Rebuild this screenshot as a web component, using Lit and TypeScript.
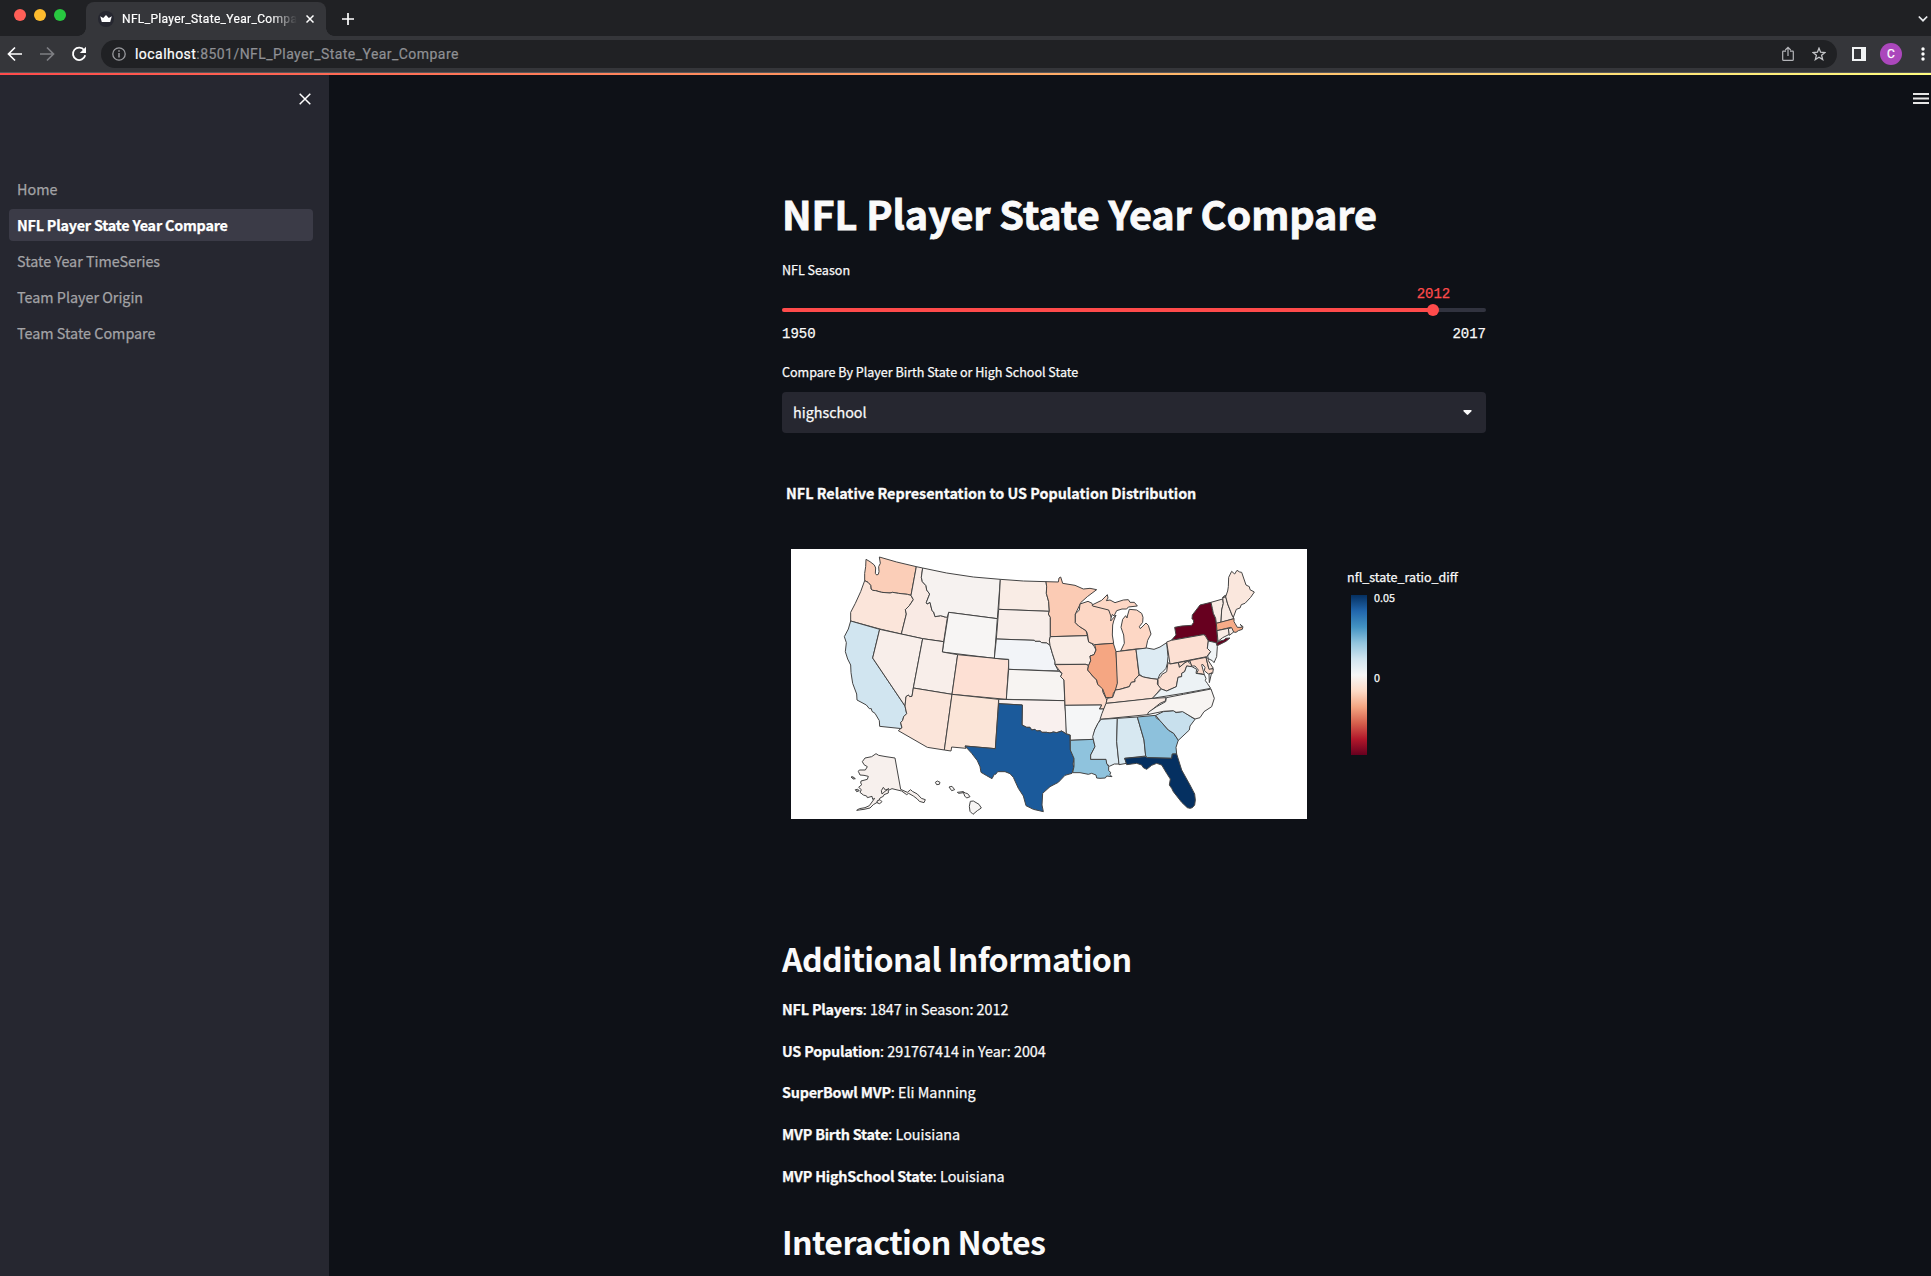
import { LitElement, html, css, svg } from "lit";
import { customElement } from "lit/decorators.js";

type Shape = { f: string; p: string };
type Region = { dx: number; shapes: Shape[] };

const REGIONS: Region[] = [
  {
    dx: 0,
    shapes: [
      { f: "#fbceb8", p: "258,58 270,65 283,75 287,84 286,100 290,105 295,103 297,95 296,80 301,70 298,51 350,66 409,80 393,166 382,163 355,160 338,157 330,159 305,157 287,152 278,151 273,147 272,136 264,127 254,122 254,100 257,80" },
      { f: "#fbe5da", p: "254,122 264,127 272,136 273,147 278,151 287,152 305,157 330,159 338,157 355,160 382,163 393,166 400,179 388,197 376,209 379,222 364,282 300,267 212,243 212,217 226,190 242,155" },
      { f: "#f9eae4", p: "409,80 428,84 424,112 427,125 438,137 440,150 449,162 439,187 441,192 450,187 456,212 461,216 465,230 482,227 495,231 503,227 491,305 428,296 364,282 379,222 376,209 388,197 400,179 393,166" },
      { f: "#f6f2f0", p: "428,84 500,99 580,111 661,118 652,236 506,217 502,232 495,231 482,227 465,230 461,216 456,212 450,187 441,192 439,187 449,162 440,150 438,137 427,125 424,112" },
      { f: "#f7f5f4", p: "506,217 652,236 643,355 487,336" },
      { f: "#d1e5f0", p: "212,243 299,268 278,354 375,498 380,521 371,530 368,541 362,548 366,566 299,559 298,542 285,520 276,514 274,506 268,506 259,495 246,488 231,480 230,462 218,430 213,398 212,375 203,357 196,335 199,308 193,290 205,267" },
      { f: "#f8eeea", p: "299,268 428,296 400,444 396,469 389,470 385,465 378,470 375,498 278,354" },
      { f: "#f8eeea", p: "428,296 491,305 487,336 533,344 516,463 400,444" },
      { f: "#fbe5da", p: "400,444 516,463 493,630 442,622 355,572 362,566 366,563 362,548 368,541 371,530 380,521 375,498 378,470 385,465 389,470 396,469" },
      { f: "#fde0d4", p: "533,344 687,359 679,478 516,463" },
      { f: "#fbe5d8", p: "516,463 656,478 646,626 555,618 558,625 515,621 513,633 493,630" },
      { f: "#f7f0ed", p: "345,654 318,650 296,646 288,641 275,650 255,654 247,665 252,674 262,680 256,690 238,690 235,694 240,705 252,706 265,709 262,718 243,723 242,730 246,733 236,742 244,749 240,757 250,765 260,768 262,773 276,769 278,778 284,775 268,797 255,803 238,806 230,811 252,808 270,804 280,794 295,785 300,774 310,769 312,764 325,759 325,751 336,746 348,749 365,753 380,764 386,760 400,768 412,777 418,784 432,788 436,779 424,775 412,762 397,754 392,749 382,757 362,748" },
      { f: "#f7f0ed", p: "310,742 304,752 306,762 315,754 327,746 316,750" },
      { f: "#f7f0ed", p: "291,783 300,779 306,785 299,791 292,789" },
      { f: "#999999", p: "213,711 218,710 226,716 220,717" },
      { f: "#aaaaaa", p: "226,749 233,748 238,752 230,755" },
      { f: "#f7f5f4", p: "466,727 472,723 480,727 478,733 470,734" },
      { f: "#f7f5f4", p: "507,741 516,739 524,749 515,752" },
      { f: "#f7f5f4", p: "532,757 549,755 551,758 536,760" },
      { f: "#f7f5f4", p: "549,755 556,759 563,761 570,770 560,774 554,768 552,762" },
      { f: "#f7f5f4", p: "571,784 580,783 597,793 604,804 592,812 579,823 570,814 568,799" },
    ],
  },
  {
    dx: 660,
    shapes: [
      { f: "#f9ece5", p: "1,118 70,123 138,125 140,140 139,160 146,185 148,214 -4,208" },
      { f: "#f8eeea", p: "-4,208 148,214 145,222 151,232 151,290 148,300 153,318 140,309 125,308 120,304 105,304 103,301 -11,297" },
      { f: "#f2f4f8", p: "-11,297 103,301 105,304 120,304 125,308 140,309 150,316 157,340 165,365 165,373 175,393 26,388 26,358 -17,355" },
      { f: "#f7f4f2", p: "26,388 177,394 186,400 182,410 192,420 194,482 19,478" },
      { f: "#f9f0ee", p: "-4,478 194,482 195,500 199,540 199,582 185,573 170,578 160,576 150,579 140,577 125,577 121,572 110,573 105,568 95,570 90,562 80,562 66,555 67,495 -4,491" },
      { f: "#1b5a9b", p: "-4,491 67,495 66,555 80,562 90,562 95,570 105,568 110,573 121,572 125,577 140,577 150,579 160,576 170,578 185,573 196,580 210,586 211,630 222,655 219,672 221,682 216,700 195,706 175,727 150,740 128,760 126,795 130,815 100,808 78,797 70,768 55,745 40,712 30,701 15,695 -7,695 -13,703 -17,703 -24,716 -40,707 -57,697 -60,680 -68,662 -85,640 -105,618 -14,626" },
      { f: "#fbcbb4", p: "138,125 175,126 177,114 182,111 188,130 225,136 250,147 270,145 290,149 262,170 242,188 240,193 226,222 226,248 236,258 258,272 262,287 151,290 151,232 145,222 148,214 146,185 139,160 140,140" },
      { f: "#f9ece5", p: "151,290 262,287 266,306 275,310 283,320 288,330 282,344 270,348 272,362 266,376 258,373 165,373 165,365 157,340 150,316 148,300" },
      { f: "#fddbcb", p: "165,374 258,373 265,377 263,390 278,408 290,420 293,433 308,443 308,455 318,475 322,485 312,507 298,507 305,495 195,496 192,420 182,410 186,400 177,390" },
      { f: "#f5f6f7", p: "195,496 305,495 298,507 312,507 303,535 294,550 284,570 280,598 211,601 211,585 199,581" },
      { f: "#8fc3dd", p: "211,601 280,598 285,620 272,645 272,658 320,658 320,670 326,680 326,692 332,697 330,704 336,710 320,708 316,714 300,715 290,714 288,705 275,700 265,703 240,698 218,698 222,680 222,655 211,630" },
      { f: "#fdd7c5", p: "240,192 264,184 276,190 278,197 315,204 325,207 334,225 332,243 348,225 341,243 338,255 337,285 341,310 284,314 266,306 262,280 258,272 236,258 226,248 226,222 238,210" },
      { f: "#fdd7c5", p: "276,195 305,181 322,164 324,174 319,182 330,180 345,188 370,180 385,179 390,187 403,187 412,198 385,201 380,207 366,207 350,212 342,228 337,223 334,232 326,210 278,198" },
      { f: "#fdd7c5", p: "388,208 410,210 425,220 429,232 428,247 418,260 421,266 438,249 445,256 453,282 443,301 438,325 408,327 362,333 373,310 371,285 363,262 368,238 377,227 381,234 383,225" },
      { f: "#f5a682", p: "284,314 340,310 348,335 354,420 350,445 340,460 338,472 318,473 308,447 293,433 290,420 278,408 263,390 266,376 272,362 270,348 282,344 288,330" },
      { f: "#fdd2bd", p: "348,335 408,328 417,405 405,418 405,425 394,427 388,440 372,444 360,448 346,450 352,430" },
      { f: "#ddebf3", p: "408,328 440,324 462,328 480,321 500,308 504,350 502,370 498,385 487,397 480,402 473,418 450,415 430,411 420,405 417,400" },
      { f: "#fce3d7", p: "417,405 430,411 450,415 473,418 472,432 483,445 458,475 400,482 330,489 318,490 322,475 338,472 346,450 360,448 388,440 394,427 405,425 405,418" },
      { f: "#fae9e1", p: "318,490 330,489 458,475 498,473 496,483 480,490 455,510 442,524 300,538 306,520" },
      { f: "#ddebf3", p: "303,538 352,535 350,605 357,672 343,672 328,679 320,670 318,658 272,658 272,645 285,620 278,590 284,570 294,550" },
      { f: "#d7e8f1", p: "352,535 412,531 432,600 437,648 374,655 380,670 357,674 350,605" },
      { f: "#8dc1dc", p: "412,531 467,526 468,533 480,542 505,570 521,580 535,600 528,622 530,642 517,642 515,655 442,653 437,648 432,600" },
      { f: "#053061", p: "374,655 437,650 442,653 515,655 517,642 530,642 545,690 570,735 584,762 586,780 584,795 577,803 570,805 562,803 545,787 520,755 515,745 508,735 511,717 500,700 485,675 470,670 455,676 440,688 430,683 425,675 410,670 380,674" },
      { f: "#c8e0ed", p: "467,526 490,515 520,512 528,518 548,514 585,538 570,558 568,570 535,601 521,580 505,570 480,542" },
    ],
  },
  {
    dx: 1080,
    shapes: [
      { f: "#67001f", p: "94,301 108,285 104,262 125,258 155,256 161,247 160,240 156,236 157,225 180,195 213,187 217,205 220,220 227,235 229,250 232,290 232,310 205,303 195,286 190,284" },
      { f: "#67001f", p: "230,310 237,304 252,300 257,295 270,294 258,304 232,317" },
      { f: "#fce0d3", p: "80,306 94,301 190,284 195,286 205,303 202,325 212,335 200,350 90,372" },
      { f: "#f0f4f6", p: "205,303 228,308 232,320 230,350 222,368 217,362 205,356 203,348 212,335 202,325" },
      { f: "#f9ece5", p: "213,187 248,177 250,190 245,210 243,247 229,250 227,235 220,220 217,205" },
      { f: "#f8eae3", p: "248,172 256,166 263,192 276,225 282,236 243,247 245,210 250,190" },
      { f: "#fae7dd", p: "248,174 257,170 263,153 265,140 266,112 275,94 284,102 291,91 299,96 305,97 318,135 328,140 330,149 343,156 332,172 315,190 304,194 300,204 289,208 280,232 276,225 263,192 256,166" },
      { f: "#f6ab88", p: "229,250 282,236 282,245 285,250 292,262 305,262 306,258 300,253 309,260 307,268 295,272 288,277 280,276 272,262 231,272" },
      { f: "#f9ece5", p: "231,272 265,265 268,283 248,293 234,304" },
      { f: "#f9ece5", p: "265,266 275,263 281,276 268,286" },
      { f: "#fddbcb", p: "115,368 198,352 206,385 220,387 218,400 205,402 193,392 195,382 187,372 185,375 193,404 182,401 170,400 175,390 165,378 155,378 150,363 135,368 118,382" },
      { f: "#f9e4da", p: "198,352 205,356 205,362 220,385 207,388" },
      { f: "#fce0d3", p: "84,368 90,372 115,368 118,382 135,368 143,364 156,376 150,380 140,378 134,395 125,400 125,410 114,412 109,440 80,453 64,447 54,435 54,418 62,410 66,403 80,395" },
      { f: "#ecf2f5", p: "37,475 64,447 80,453 109,440 114,412 125,410 125,400 134,395 140,378 156,380 170,388 168,400 193,404 198,415 196,422 202,430 212,445 130,460" },
      { f: "#ecf2f5", p: "207,403 215,398 208,428" },
      { f: "#f7f4f2", p: "79,473 130,463 213,447 223,475 215,500 192,515 180,533 165,537 128,515 108,517 100,512 70,514 22,524 26,516 50,500 77,485" },
    ],
  },
];

const PAGES = [
  "Home",
  "NFL Player State Year Compare",
  "State Year TimeSeries",
  "Team Player Origin",
  "Team State Compare",
];

const FACTS = [
  ["NFL Players", "1847 in Season: 2012"],
  ["US Population", "291767414 in Year: 2004"],
  ["SuperBowl MVP", "Eli Manning"],
  ["MVP Birth State", "Louisiana"],
  ["MVP HighSchool State", "Louisiana"],
];

@customElement("browser-bar")
class BrowserBar extends LitElement {
  static styles = css`
    :host { display: block; flex: none; font-family: Roboto, "Liberation Sans", sans-serif; color: #fff; }
    svg { display: block; flex: none; }
    .strip { height: 36px; background: #202124; display: flex; box-sizing: border-box; padding-left: 14px; }
    .lights { display: flex; gap: 8px; padding-top: 9px; width: 72px; flex: none; }
    .light { width: 12px; height: 12px; border-radius: 50%; }
    .red { background: #ff5f57; }
    .yellow { background: #febc2e; }
    .green { background: #28c840; }
    .tab { margin-top: 2px; width: 240px; height: 34px; box-sizing: border-box; background: #35363a; border-radius: 8px 8px 0 0; display: flex; align-items: center; padding: 0 10px 0 12px; position: relative; }
    .tab::before, .tab::after { content: ""; position: absolute; bottom: 0; width: 8px; height: 8px; }
    .tab::before { left: -8px; background: radial-gradient(circle at 0 0, transparent 7.5px, #35363a 8px); }
    .tab::after { right: -8px; background: radial-gradient(circle at 100% 0, transparent 7.5px, #35363a 8px); }
    .title { margin-left: 8px; width: 175px; overflow: hidden; white-space: nowrap; font-size: 12px; line-height: 18px; letter-spacing: 0.33px; -webkit-text-stroke: 0.2px; -webkit-mask-image: linear-gradient(90deg, #000 148px, transparent 175px); }
    .tabx { margin-left: 9px; }
    .plus { margin: 13px 0 0 16px; }
    .chev { margin: 15px 3px 0 auto; }
    .bar { height: 36px; background: #35363a; display: flex; align-items: center; box-sizing: border-box; padding: 0 6px 0 7px; }
    .back { margin-right: 16px; }
    .fwd { margin-right: 16px; }
    .reload { margin-right: 14px; }
    .omni { flex: 1; height: 28px; background: #202124; border-radius: 14px; display: flex; align-items: center; padding: 0 11px; }
    .url { flex: 1; margin-left: 9px; font-size: 14px; line-height: 20px; color: #8f9094; white-space: nowrap; letter-spacing: 0.45px; -webkit-text-stroke: 0.2px; }
    .host { color: #fff; }
    .star { margin-left: 18px; }
    .panel { margin-left: 15px; }
    .avatar { margin: 0 19px 0 14px; width: 22px; height: 22px; border-radius: 50%; background: #ab47bc; font-size: 12px; line-height: 22px; text-align: center; }
    .sep { height: 1px; background: #55565a; }
  `;
  render() {
    return html`
      <div class="strip">
        <div class="lights">
          <div class="light red"></div><div class="light yellow"></div><div class="light green"></div>
        </div>
        <div class="tab">
          <svg width="16" height="16" viewBox="0 0 16 16"><circle cx="8" cy="8" r="8" fill="#262730"/><path d="M2.2 5.2 5.2 7 8 4 10.800 7l3-1.800L12.200 11H3.800z" fill="#fff"/></svg>
          <span class="title">NFL_Player_State_Year_Compare</span>
          <svg class="tabx" width="8" height="8" viewBox="0 0 8 8"><path d="M.5.5l7 7M7.500.5l-7 7" stroke="#fff" stroke-width="1.500"/></svg>
        </div>
        <svg class="plus" width="12" height="12" viewBox="0 0 12 12"><path d="M6 0v12M0 6h12" stroke="#fff" stroke-width="1.700"/></svg>
        <svg class="chev" width="10" height="8" viewBox="0 0 10 8"><path d="M.8 1.500 5 5.700 9.200 1.500" fill="none" stroke="#e8eaed" stroke-width="1.700"/></svg>
      </div>
      <div class="bar">
        <svg class="back" width="16" height="16" viewBox="0 0 16 16"><path d="M15 8H2M8 1.500 1.500 8 8 14.500" fill="none" stroke="#fff" stroke-width="1.700"/></svg>
        <svg class="fwd" width="16" height="16" viewBox="0 0 16 16"><path d="M1 8h13M8 1.500 14.500 8 8 14.500" fill="none" stroke="#7e7f83" stroke-width="1.700"/></svg>
        <svg class="reload" width="16" height="16" viewBox="0 0 16 16"><path d="M13.200 4.200A6.200 6.200 0 1 0 14.200 9.200" fill="none" stroke="#fff" stroke-width="1.800"/><path d="M15 .8V7H8.800z" fill="#fff"/></svg>
        <div class="omni">
          <svg width="14" height="14" viewBox="0 0 14 14"><circle cx="7" cy="7" r="6.200" fill="none" stroke="#9a9b9f" stroke-width="1.300"/><path d="M7 6v4.500M7 3.300v1.500" stroke="#9a9b9f" stroke-width="1.500"/></svg>
          <div class="url"><span class="host">localhost</span>:8501/NFL_Player_State_Year_Compare</div>
          <svg width="12" height="16" viewBox="0 0 12 16"><path d="M4 5.200H1.300a.6.600 0 0 0-.6.600v7.600a1 1 0 0 0 1 1h8.600a1 1 0 0 0 1-1V5.800a.6.600 0 0 0-.6-.6H8M6 10V1.500M3.300 4 6 1.300 8.700 4" fill="none" stroke="#b4b5b9" stroke-width="1.200"/></svg>
          <svg class="star" width="14" height="14" viewBox="0 0 14 14"><path d="M7 1.200 8.600 5.200 12.900 5.500 9.600 8.300 10.700 12.600 7 10.200 3.300 12.600 4.400 8.300 1.100 5.500 5.400 5.200z" fill="none" stroke="#c4c5c8" stroke-width="1.300"/></svg>
        </div>
        <svg class="panel" width="14" height="14" viewBox="0 0 14 14"><path fill="#f1f3f4" fill-rule="evenodd" d="M0 0h14v14H0zM2 2v10h7V2z"/></svg>
        <div class="avatar">C</div>
        <svg width="4" height="14" viewBox="0 0 4 14" fill="#fff"><circle cx="2" cy="2" r="1.700"/><circle cx="2" cy="7" r="1.700"/><circle cx="2" cy="12" r="1.700"/></svg>
      </div>
      <div class="sep"></div>
    `;
  }
}

@customElement("state-map")
class StateMap extends LitElement {
  static styles = css`
    :host { display: block; }
    .map { display: block; width: 516px; height: 270px; background: #fff; }
    .shape { stroke: #444; stroke-width: 3; stroke-linejoin: round; }
  `;
  render() {
    return html`<svg class="map" viewBox="33 27 1548 810">
      ${REGIONS.map(
        (r) => svg`<g transform="translate(${r.dx} 0)">${r.shapes.map(
          (s) => svg`<polygon class="shape" fill=${s.f} points=${s.p}></polygon>`
        )}</g>`
      )}
    </svg>`;
  }
}

@customElement("app-root")
class AppRoot extends LitElement {
  static styles = css`
    :host { display: flex; flex-direction: column; height: 1276px; overflow: hidden; background: #0e1117; color: #fafafa; font-family: "Noto Sans CJK SC", "Open Sans", sans-serif; font-size: 14.35px; -webkit-text-stroke: 0.25px; }
    svg { display: block; }
    .accent { height: 2px; flex: none; background: linear-gradient(90deg, #ff4b4b, #fffd80); }
    .body { flex: 1; display: flex; min-height: 0; }
    .side { width: 329px; flex: none; background: #262730; box-sizing: border-box; padding: 18px 16px 0 9px; }
    .close { margin: 0 2px 0 auto; }
    .nav { margin-top: 68px; display: flex; flex-direction: column; gap: 4px; }
    .item { height: 32px; border-radius: 4px; padding-left: 8px; line-height: 31px; color: #a3a3a6; white-space: nowrap; }
    .on { background: #3b3b47; color: #fff; font-weight: 700; letter-spacing: -0.21px; }
    .main { flex: 1; display: flex; position: relative; justify-content: center; }
    .menu { position: absolute; top: 18px; right: 2px; }
    .col { width: 704px; margin-left: 8px; }
    .h1 { margin: 112px 0 0; font-size: 39.6px; line-height: 52px; font-weight: 700; white-space: nowrap; letter-spacing: -0.11px; -webkit-text-stroke: 0.8px; }
    .label { font-size: 12.55px; line-height: 20px; height: 20px; }
    .season { margin-top: 21px; }
    .mono { font-family: "Liberation Mono", monospace; font-size: 14px; line-height: 18px; height: 18px; }
    .valrow { display: flex; margin-top: 5px; color: #ff4b4b; }
    .val { transform: translateX(-50%); }
    .track { margin-top: 5px; height: 4px; border-radius: 4px; display: flex; align-items: center; background: #31333f; }
    .fill { height: 4px; background: #ff4b4b; border-radius: 4px 0 0 4px; }
    .thumb { width: 12px; height: 12px; border-radius: 50%; background: #ff4b4b; margin-left: -6px; }
    .ends { display: flex; justify-content: space-between; margin-top: 13px; }
    .by { margin-top: 19px; }
    .select { margin-top: 10px; height: 41px; border-radius: 4px; background: #262730; display: flex; align-items: center; justify-content: space-between; padding: 0 14px 0 11px; box-sizing: border-box; }
    .choice { line-height: 38px; height: 40px; }
    .ctitle { margin: 50px 0 0 4px; font-weight: 700; font-size: 14.35px; line-height: 20px; height: 20px; -webkit-text-stroke: 0.3px; white-space: nowrap; }
    .chart { margin: 46px 0 0 9px; display: flex; align-items: flex-start; height: 270px; width: 695px; }
    .legend { margin: 18px 0 0 40px; }
    .ltitle { font-size: 12.5px; line-height: 20px; height: 20px; }
    .scale { display: flex; margin: 8px 0 0 4px; }
    .ramp { width: 16px; height: 160px; background: linear-gradient(180deg, #053061 0%, #2166ac 10%, #4393c3 20%, #92c5de 30%, #d1e5f0 40%, #f7f7f7 50%, #fddbc7 60%, #f4a582 70%, #d6604d 80%, #b2182b 90%, #67001f 100%); }
    .ticks { margin: -8px 0 0 7px; display: flex; flex-direction: column; justify-content: space-between; height: 100px; font-size: 10.8px; line-height: 20px; }
    .h2 { font-size: 32.2px; line-height: 40px; height: 40px; font-weight: 600; margin: 119px 0 0; white-space: nowrap; letter-spacing: -0.62px; -webkit-text-stroke: 0; }
    .facts { margin-top: 19px; display: flex; flex-direction: column; gap: 17.7px; }
    .fact { line-height: 24px; height: 24px; }
    .fact b { letter-spacing: -0.2px; }
    .notes { margin-top: 33px; }
  `;
  render() {
    return html`
      <browser-bar></browser-bar>
      <div class="accent"></div>
      <div class="body">
        <div class="side">
          <svg class="close" width="12" height="12" viewBox="0 0 12 12"><path d="M.7.700l10.600 10.600M11.300.700.700 11.300" stroke="#fff" stroke-width="1.500"/></svg>
          <div class="nav">
            ${PAGES.map((p, i) => html`<div class="item ${i === 1 ? "on" : ""}">${p}</div>`)}
          </div>
        </div>
        <div class="main">
          <svg class="menu" width="16" height="11" viewBox="0 0 16 11"><path d="M0 1h16M0 5.500h16M0 10h16" stroke="#e6e6e6" stroke-width="1.800"/></svg>
          <div class="col">
            <h1 class="h1">NFL Player State Year Compare</h1>
            <div class="label season">NFL Season</div>
            <div class="mono valrow"><span style="width:${(62 / 67) * 100}%"></span><span class="val">2012</span></div>
            <div class="track"><div class="fill" style="width:${(62 / 67) * 100}%"></div><div class="thumb"></div></div>
            <div class="mono ends"><span>1950</span><span>2017</span></div>
            <div class="label by">Compare By Player Birth State or High School State</div>
            <div class="select"><span class="choice">highschool</span><svg width="9" height="5" viewBox="0 0 9 5"><path d="M1 0h7a.8.800 0 0 1 .5 1.300L5.200 4.600a1 1 0 0 1-1.400 0L.5 1.300A.8.800 0 0 1 1 0z" fill="#fafafa"/></svg></div>
            <div class="ctitle">NFL Relative Representation to US Population Distribution</div>
            <div class="chart">
              <state-map></state-map>
              <div class="legend">
                <div class="ltitle">nfl_state_ratio_diff</div>
                <div class="scale"><div class="ramp"></div><div class="ticks"><span>0.05</span><span>0</span></div></div>
              </div>
            </div>
            <h2 class="h2">Additional Information</h2>
            <div class="facts">
              ${FACTS.map(([k, v]) => html`<div class="fact"><b>${k}</b>: ${v}</div>`)}
            </div>
            <h2 class="h2 notes">Interaction Notes</h2>
          </div>
        </div>
      </div>
    `;
  }
}
